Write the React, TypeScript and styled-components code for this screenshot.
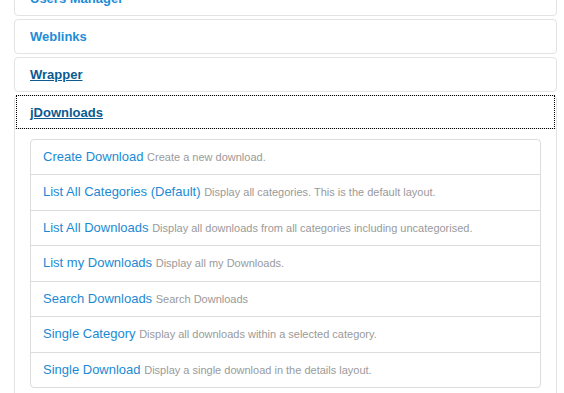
import styled, { createGlobalStyle } from 'styled-components'

type Layout = {
  title: string
  desc: string
}

const layouts: Layout[] = [
  { title: 'Create Download', desc: 'Create a new download.' },
  { title: 'List All Categories (Default)', desc: 'Display all categories. This is the default layout.' },
  { title: 'List All Downloads', desc: 'Display all downloads from all categories including uncategorised.' },
  { title: 'List my Downloads', desc: 'Display all my Downloads.' },
  { title: 'Search Downloads', desc: 'Search Downloads' },
  { title: 'Single Category', desc: 'Display all downloads within a selected category.' },
  { title: 'Single Download', desc: 'Display a single download in the details layout.' },
]

const groups = ['Users Manager', 'Weblinks', 'Wrapper']

const App = () => {
  return (
    <>
      <GlobalStyle />
      <Accordion>
        {groups.map((name) => (
          <Group key={name}>
            <Toggle href='#' visited={name === 'Wrapper'}>
              {name}
            </Toggle>
          </Group>
        ))}
        <Group>
          <Toggle href='#' visited focused>
            jDownloads
          </Toggle>
          <Inner>
            <List>
              {layouts.map((item) => (
                <Item key={item.title}>
                  <ItemTitle>{item.title}</ItemTitle> <ItemDesc>{item.desc}</ItemDesc>
                </Item>
              ))}
            </List>
          </Inner>
        </Group>
      </Accordion>
    </>
  )
}

export default App

const GlobalStyle = createGlobalStyle`
  html, body {
    margin: 0;
    padding: 0;
    overflow: hidden;
    background: #fff;
    font-family: "Liberation Sans", Arial, sans-serif;
  }
`

const Accordion = styled.div`
  display: flex;
  flex-direction: column;
  gap: 3px;
  width: 543px;
  margin: -19px 0 0 14px;
`

const Group = styled.div`
  border: 1px solid #e3e3e3;
  border-radius: 4px;
  background: #fff;
`

const Toggle = styled.a<{ visited?: boolean; focused?: boolean }>`
  display: block;
  margin: 0 2px;
  padding: ${(p) => (p.focused ? '8px 13px 7px' : '8px 13px')};
  font-size: 13px;
  font-weight: bold;
  line-height: 17px;
  color: ${(p) => (p.visited ? '#0b5b91' : '#1d8dd8')};
  text-decoration: ${(p) => (p.visited ? 'underline' : 'none')};
  outline: ${(p) => (p.focused ? '1px dotted #000' : 'none')};
  position: relative;
`

const Inner = styled.div`
  border-top: 1px solid #e3e3e3;
  padding: 10px 15px;
`

const List = styled.div`
  border: 1px solid #dcdcdc;
  border-radius: 4px;
  display: flex;
  flex-direction: column;
`

const Item = styled.div`
  padding: 10px 12px;
  font-size: 13px;
  line-height: 14.43px;
  white-space: nowrap;
  & + & {
    border-top: 1px solid #dcdcdc;
  }
`

const ItemTitle = styled.span`
  color: #1b8ad4;
`

const ItemDesc = styled.span`
  color: #9a9a9a;
  font-size: 11px;
  line-height: 1;
`
